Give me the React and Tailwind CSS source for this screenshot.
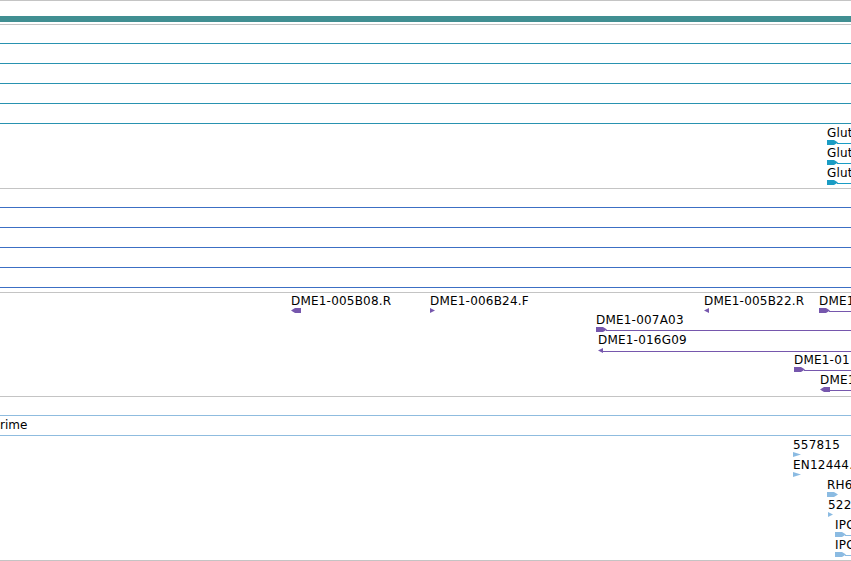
import React from 'react';

// glyph shapes, all 5px tall
const SHAPES = {
  rblock: { points: '0,0 7,0 11,2.5 7,5 0,5', w: 11 },
  lblock: { points: '0,2.5 4,0 10,0 10,5 4,5', w: 10 },
  rtri: { points: '0,0 5,2.5 0,5', w: 5 },
  ltri: { points: '5,0 0,2.5 5,5', w: 5 },
  rflag: { points: '0,0 8,2.5 0,5', w: 8 },
};

const glutFeatures = [
  { x: 827, top: 3, label: 'Glut', shape: 'rblock', line: true },
  { x: 827, top: 23, label: 'Glut', shape: 'rblock', line: true },
  { x: 827, top: 43, label: 'Glut', shape: 'rblock', line: true },
];

const dmeFeatures = [
  { x: 291, top: 2, label: 'DME1-005B08.R', shape: 'lblock' },
  { x: 430, top: 2, label: 'DME1-006B24.F', shape: 'rtri' },
  { x: 704, top: 2, label: 'DME1-005B22.R', shape: 'ltri' },
  { x: 819, top: 2, label: 'DME1', shape: 'rblock', line: true },
  { x: 596, top: 21, label: 'DME1-007A03', shape: 'rblock', line: true },
  { x: 598, top: 41, label: 'DME1-016G09', shape: 'ltri', line: true, glyphDy: 1 },
  { x: 794, top: 61, label: 'DME1-01', shape: 'rblock', line: true },
  { x: 820, top: 81, label: 'DME1', shape: 'lblock', line: true },
];

const estFeatures = [
  { x: 793, top: 3, label: '557815', shape: 'rflag' },
  { x: 793, top: 23, label: 'EN12444.', shape: 'rflag' },
  { x: 827, top: 43, label: 'RH6', shape: 'rblock' },
  { x: 828, top: 63, label: '522', shape: 'rtri' },
  { x: 835, top: 83, label: 'IPC', shape: 'rblock', line: true },
  { x: 835, top: 103, label: 'IPC', shape: 'rblock', line: true },
];

const Feature = ({ f, color }) => {
  const shape = SHAPES[f.shape];
  const width = 851 - f.x;
  const glyphTop = f.top + 13 + (f.glyphDy ?? 0);
  return (
    <>
      <div
        className="absolute whitespace-nowrap text-[12px] leading-[12px] tracking-[0.2px] text-black"
        style={{ left: f.x, top: f.top }}
      >
        {f.label}
      </div>
      <svg
        className="absolute"
        style={{ left: f.x, top: glyphTop }}
        width={width}
        height={6}
      >
        {f.line && (
          <line x1={shape.w - 1} y1={3.5} x2={width} y2={3.5} stroke={color} strokeWidth={1} />
        )}
        <polygon points={shape.points} fill={color} />
      </svg>
    </>
  );
};

const EmptyRows = ({ count, border }) => (
  <>
    {Array.from({ length: count }).map((_, i) => (
      <div key={i} className={`${i === 0 ? 'h-[19px]' : 'h-[20px]'} border-b ${border}`} />
    ))}
  </>
);

export default function App() {
  return (
    <div className="w-[851px] h-[561px] overflow-hidden bg-white font-['DejaVu_Sans',sans-serif]">
      {/* ruler area */}
      <div className="h-px bg-[#c4c4c4]" />
      <div className="h-[15px]" />
      <div className="h-[6px] bg-[#418f92]" />
      <div className="h-[2px]" />
      <div className="h-px bg-[#c4c4c4]" />

      {/* empty tracks, teal */}
      <EmptyRows count={5} border="border-[#2992b0]" />

      {/* Glut track */}
      <div className="relative h-[65px] border-b border-[#c4c4c4] overflow-hidden">
        {glutFeatures.map((f, i) => (
          <Feature key={i} f={f} color="#1a9cc4" />
        ))}
      </div>

      {/* empty tracks, blue */}
      <EmptyRows count={5} border="border-[#3c6fc4]" />
      <div className="h-[5px] border-b border-[#c4c4c4]" />

      {/* DME track */}
      <div className="relative h-[104px] border-b border-[#c4c4c4] overflow-hidden">
        {dmeFeatures.map((f, i) => (
          <Feature key={i} f={f} color="#7657ad" />
        ))}
      </div>

      <div className="h-[19px] border-b border-[#8fbcdf]" />
      <div className="h-[20px] border-b border-[#8fbcdf] pt-[3px] text-[12px] leading-[12px] text-black">
        rime
      </div>

      {/* EST track */}
      <div className="relative h-[125px] border-b border-[#c4c4c4] overflow-hidden">
        {estFeatures.map((f, i) => (
          <Feature key={i} f={f} color="#8bbbe2" />
        ))}
      </div>
    </div>
  );
}
